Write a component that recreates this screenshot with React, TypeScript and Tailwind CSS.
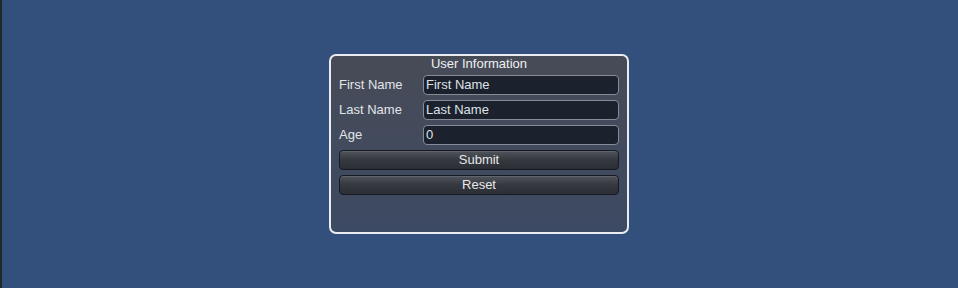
const fields = [
  { label: 'First Name', value: 'First Name' },
  { label: 'Last Name', value: 'Last Name' },
  { label: 'Age', value: '0' },
]

function GuiButton({ text }: { text: string }) {
  return (
    <button
      type="button"
      className="h-[20px] w-full rounded-[4px] border border-[#16191f] bg-gradient-to-b from-[#50545c] via-[#35383e] to-[#2b2e34] text-[13px] leading-[18px] text-[#e6e8ec] shadow-[inset_0_1px_0_#60646c]"
    >
      {text}
    </button>
  )
}

export default function App() {
  return (
    <div className="relative flex h-[288px] w-full items-center justify-center bg-[#32507b] font-['Liberation_Sans',Arial,sans-serif]">
      <div className="absolute left-0 top-0 h-full w-[2px] bg-[#1f2a26]" />
      <div className="flex h-[180px] w-[300px] flex-col rounded-[7px] border-2 border-[#e9ecf0] bg-gradient-to-b from-[#474b56] to-[#3d4a63]">
        <div className="h-[19px] text-center text-[13px] leading-[16px] text-[#eef0f3]">User Information</div>
        <div className="flex flex-col gap-[5px] px-[8px]">
          {fields.map((f) => (
            <div key={f.label} className="flex h-[20px] items-center">
              <span className="w-[84px] text-[13px] text-[#e2e5ea]">{f.label}</span>
              <div className="flex h-[20px] w-[196px] items-center rounded-[4px] border border-[#858b97] bg-[#1b212d] px-[2px] text-[13px] text-[#dfe2e7]">
                {f.value}
              </div>
            </div>
          ))}
          <GuiButton text="Submit" />
          <GuiButton text="Reset" />
        </div>
      </div>
    </div>
  )
}
